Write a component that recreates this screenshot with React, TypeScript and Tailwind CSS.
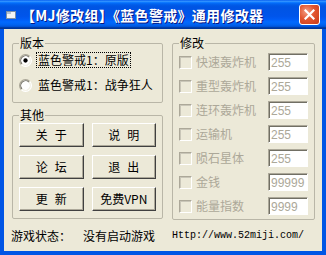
import React from "react";

function Radio({ checked }: { checked?: boolean }) {
  return (
    <svg width="13" height="13" viewBox="0 0 12 12" className="shrink-0">
      <circle cx="6" cy="6" r="5" fill="#ffffff" />
      <path d="M2.11,9.89 A5.5,5.5 0 0 1 9.89,2.11" fill="none" stroke="#ACA899" strokeWidth="1" />
      <path d="M9.89,2.11 A5.5,5.5 0 0 1 2.11,9.89" fill="none" stroke="#ffffff" strokeWidth="1" />
      <path d="M2.82,9.18 A4.5,4.5 0 0 1 9.18,2.82" fill="none" stroke="#716F64" strokeWidth="1" />
      <path d="M9.18,2.82 A4.5,4.5 0 0 1 2.82,9.18" fill="none" stroke="#F1EFE2" strokeWidth="1" />
      {checked && <circle cx="6" cy="6" r="2" fill="#000000" />}
    </svg>
  );
}

function Btn({ children }: { children: React.ReactNode }) {
  return (
    <div className="h-[24px] flex items-center justify-center bg-[#ECE9D8] border border-t-white border-l-white border-r-[#404040] border-b-[#404040] shadow-[inset_-1px_-1px_0_#ACA899] text-[12px] leading-[14px] text-black">
      {children}
    </div>
  );
}

function CheckRow({ label, value }: { label: string; value: string }) {
  return (
    <div className="flex items-center h-[18px]">
      <div className="w-[13px] h-[13px] shrink-0 bg-[#ECE9D8] border border-t-[#ACA899] border-l-[#ACA899] border-b-white border-r-white shadow-[inset_1px_1px_0_#C9C6B8]" />
      <span className="ml-[4px] flex-1 text-[12px] leading-[14px] text-[#ACA899]">{label}</span>
      <div className="w-[40px] h-[18px] shrink-0 bg-white border border-t-[#ACA899] border-l-[#ACA899] border-b-white border-r-white shadow-[inset_1px_1px_0_#716F64] flex items-center pl-[2px] pt-[1px]">
        <span className="font-['Liberation_Sans',sans-serif] text-[12px] leading-[12px] text-[#ACA899]">{value}</span>
      </div>
    </div>
  );
}

export default function App() {
  return (
    <div className="w-[326px] h-[255px] flex flex-col overflow-hidden bg-[#0055E5] font-['Noto_Sans_CJK_SC','Noto_Sans',sans-serif]">
      {/* title bar */}
      <div className="h-[29px] shrink-0 flex items-center bg-[linear-gradient(180deg,#0058EE_0%,#3593FF_4%,#288EFF_6%,#127DFF_8%,#036FFC_10%,#0262EE_14%,#0057E5_20%,#0054E3_24%,#0055EB_56%,#005BF5_66%,#026AFE_76%,#0062EF_86%,#0052D6_92%,#0040AB_94%,#003092_100%)]">
        <svg width="10" height="8" viewBox="0 0 10 8" className="ml-[6px] mt-[1px] shrink-0">
          <rect x="0.5" y="0.5" width="9" height="7" fill="#F4F4F4" stroke="#7A8FA8" />
          <rect x="1" y="1" width="4" height="2" fill="#B8C4D4" />
        </svg>
        <span className="ml-[5px] text-white font-bold text-[14px] leading-[16px] tracking-[0.3px] [text-shadow:1px_1px_0_#0A1883] whitespace-nowrap">
          【MJ修改组】《蓝色警戒》通用修改器
        </span>
        <div className="ml-auto mr-[6px] w-[21px] h-[21px] rounded-[3px] border border-white bg-[radial-gradient(circle_at_35%_35%,#F39E84_0%,#E2552F_45%,#C93A17_100%)] flex items-center justify-center">
          <svg width="11" height="11" viewBox="0 0 11 11">
            <path d="M1.5,1.5 L9.5,9.5 M9.5,1.5 L1.5,9.5" stroke="#ffffff" strokeWidth="2.2" strokeLinecap="square" />
          </svg>
        </div>
      </div>

      {/* body */}
      <div className="flex-1 mx-[4px] mb-[4px] bg-[#ECE9D8] flex flex-col pt-[7px]">
        <div className="flex pl-[8px] pr-[7px] gap-[9px]">
          {/* left column */}
          <div className="w-[151px] flex flex-col">
            <fieldset className="border border-[#B9B6A7] rounded-[2px] px-[6px] pt-[2px] pb-[9px]">
              <legend className="px-[1px] bg-[#ECE9D8] text-[12px] leading-[14px] text-black">版本</legend>
              <div className="flex flex-col gap-[9px]">
                <div className="flex items-center h-[16px]">
                  <Radio checked />
                  <span className="ml-[4px] border border-dotted border-black px-[1px] text-[12px] leading-[14px] text-black">
                    蓝色警戒1：原版
                  </span>
                </div>
                <div className="flex items-center h-[16px]">
                  <Radio />
                  <span className="ml-[4px] border border-transparent px-[1px] text-[12px] leading-[14px] text-black">
                    蓝色警戒1：战争狂人
                  </span>
                </div>
              </div>
            </fieldset>
            <fieldset className="mt-[5px] border border-[#B9B6A7] rounded-[2px] px-[6px] pt-[1px] pb-[7px]">
              <legend className="px-[1px] bg-[#ECE9D8] text-[12px] leading-[14px] text-black">其他</legend>
              <div className="grid grid-cols-2 gap-x-[8px] gap-y-[8px]">
                <Btn>
                  关<span className="inline-block w-[7px]" />于
                </Btn>
                <Btn>
                  说<span className="inline-block w-[7px]" />明
                </Btn>
                <Btn>
                  论<span className="inline-block w-[7px]" />坛
                </Btn>
                <Btn>
                  退<span className="inline-block w-[7px]" />出
                </Btn>
                <Btn>
                  更<span className="inline-block w-[7px]" />新
                </Btn>
                <Btn>免费VPN</Btn>
              </div>
            </fieldset>
          </div>

          {/* right column */}
          <fieldset className="w-[143px] border border-[#B9B6A7] rounded-[2px] px-[6px] pt-[3px] pb-[4px]">
            <legend className="px-[1px] bg-[#ECE9D8] text-[12px] leading-[14px] text-black">修改</legend>
            <div className="flex flex-col gap-[6px]">
              <CheckRow label="快速轰炸机" value="255" />
              <CheckRow label="重型轰炸机" value="255" />
              <CheckRow label="连环轰炸机" value="255" />
              <CheckRow label="运输机" value="255" />
              <CheckRow label="陨石星体" value="255" />
              <CheckRow label="金钱" value="99999" />
              <CheckRow label="能量指数" value="9999" />
            </div>
          </fieldset>
        </div>

        {/* status */}
        <div className="flex-1 flex items-center pl-[7px] text-black">
          <span className="w-[72px] text-[12px] leading-[14px]">游戏状态：</span>
          <span className="w-[89px] text-[12px] leading-[14px]">没有启动游戏</span>
          <span className="font-['Liberation_Mono',monospace] text-[10px] leading-[12px]">Http://www.52miji.com/</span>
        </div>
      </div>
    </div>
  );
}
